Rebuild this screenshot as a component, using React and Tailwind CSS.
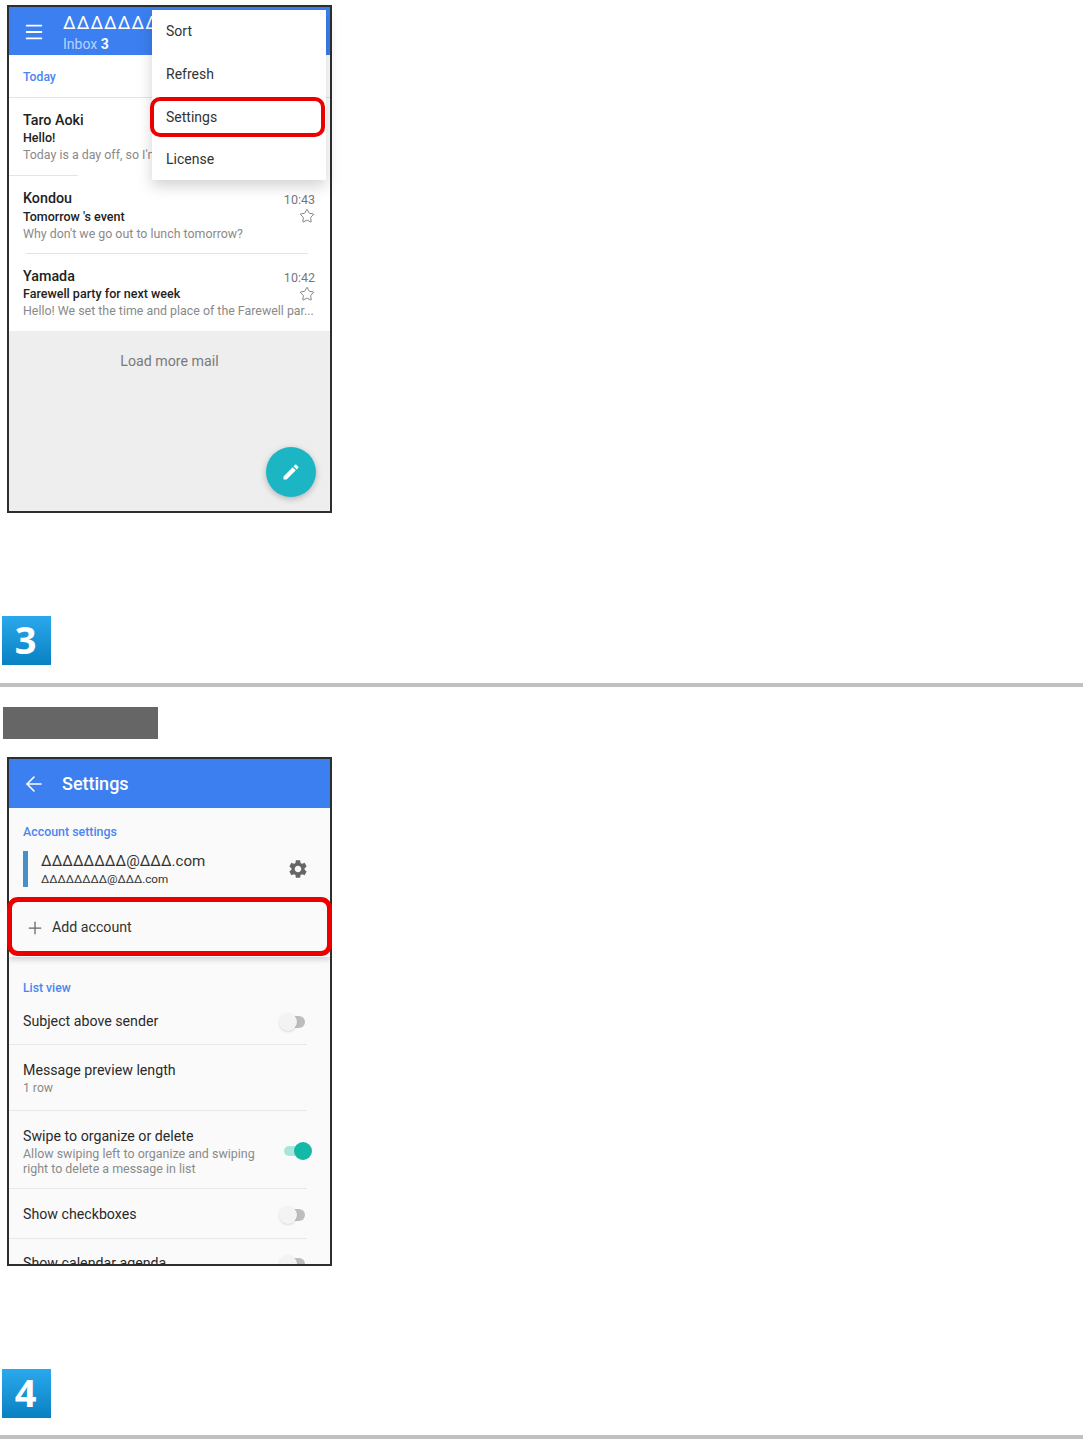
import { ArrowLeft, Menu, Plus, Star } from "lucide-react";
import { MdEdit, MdSettings } from "react-icons/md";

const mails = [
  { name: "Taro Aoki", subject: "Hello!", body: "Today is a day off, so I'm going out", time: "10:44", h: "h-[78px]", line: "right-auto w-[69px]", sub: "leading-[16px]" },
  { name: "Kondou", subject: "Tomorrow 's event", body: "Why don't we go out to lunch tomorrow?", time: "10:43", h: "h-[78px]", line: "left-[17px] right-[22px]", sub: "leading-[17px]" },
  { name: "Yamada", subject: "Farewell party for next week", body: "Hello! We set the time and place of the Farewell par...", time: "10:42", h: "h-[77px]", sub: "leading-[16px]" },
];

// frame with the clipped screen inside, marks sit on top of the frame
function Phone({ children, marks, className = "" }) {
  return (
    <div className={`relative ml-[7px] w-[325px] border-2 border-[#2b2f2e] bg-white ${className}`}>
      <div className="h-full overflow-hidden">{children}</div>
      {marks}
    </div>
  );
}

function MailRow({ mail }) {
  return (
    <div className={`relative ${mail.h} pl-[14px] pr-[15px] pt-[12px]`}>
      <div className="flex justify-between">
        <div className="min-w-0">
          <p className="text-[14.3px] leading-[20px] font-medium text-[#222]">{mail.name}</p>
          <p className={`text-[12.5px] font-medium text-[#222] ${mail.sub}`}>{mail.subject}</p>
          <p className="whitespace-nowrap text-[12.4px] leading-[17px] text-[#8a8a8a]">{mail.body}</p>
        </div>
        <div className="flex shrink-0 flex-col items-end pt-[3px]">
          <span className="text-[12.5px] leading-[17px] text-[#777]">{mail.time}</span>
          <Star size={16} strokeWidth={1.2} className="text-[#666]" />
        </div>
      </div>
      {mail.line && <div className={`absolute bottom-0 left-0 h-px bg-[#e4e4e4] ${mail.line}`} />}
    </div>
  );
}

function Toggle({ on }) {
  if (on) {
    return (
      <div className="relative h-[20px] w-[28px]">
        <div className="absolute left-0 top-[5px] h-[10px] w-[22px] rounded-full bg-[#a8e6dc]" />
        <div className="absolute right-0 top-[1px] h-[18px] w-[18px] rounded-full bg-[#14b8a6]" />
      </div>
    );
  }
  return (
    <div className="relative h-[20px] w-[28px]">
      <div className="absolute right-0 top-[4px] h-[12px] w-[22px] rounded-full bg-[#bdbdbd]" />
      <div className="absolute left-[2px] top-[1px] h-[18px] w-[18px] rounded-full bg-[#f3f3f3] shadow-sm" />
    </div>
  );
}

function ToggleRow({ label, h, border = true }) {
  return (
    <div className={`mr-[23px] flex items-center justify-between pl-[14px] pt-[2px] ${h} ${border ? "border-b border-[#e8e8e8]" : ""}`}>
      <span className="text-[14.2px] text-[#2a2a2a]">{label}</span>
      <div className="mr-[2px]"><Toggle /></div>
    </div>
  );
}

function StepBadge({ n, className = "" }) {
  return (
    <div className={`ml-[2px] flex h-[49px] w-[49px] items-center justify-center bg-gradient-to-b from-[#29a9ec] to-[#0681c2] pb-[4px] pr-[2px] font-['Open_Sans',sans-serif] text-[38px] leading-none font-bold text-white ${className}`}>
      {n}
    </div>
  );
}

function InboxScreen() {
  return (
    <Phone
      className="mt-[5px] h-[508px]"
      marks={
        <>
          <div className="absolute left-[143px] top-[3px] h-[170px] w-[174px] bg-white pl-[14px] pt-[0.5px] text-[14px] text-[#333] shadow-[0_6px_14px_rgba(0,0,0,0.18)]">
            {["Sort", "Refresh", "Settings", "License"].map((t) => (
              <div key={t} className="flex h-[42.7px] items-center">{t}</div>
            ))}
          </div>
          <div className="absolute left-[141px] top-[90px] h-[40px] w-[175px] rounded-[10px] border-[4px] border-[#ea0000]" />
          <div className="absolute left-[257px] top-[440px] flex h-[50px] w-[50px] items-center justify-center rounded-full bg-[#1cb5c4] text-white shadow-[0_2px_6px_rgba(0,0,0,0.25)]">
            <MdEdit size={20} />
          </div>
        </>
      }
    >
      <div className="flex h-[48px] items-center bg-[#3b7ff0] text-white">
        <Menu size={22} strokeWidth={2} className="ml-[14px] mt-[2px]" />
        <div className="ml-[18px] mt-[4px] whitespace-nowrap">
          <p className="text-[18px] leading-[22px] tracking-[1px]">ΔΔΔΔΔΔΔΔΔΔ</p>
          <p className="mt-[1px] text-[14px] leading-[19px] text-[#b9d2fb]">
            Inbox <b className="font-bold text-white">3</b>
          </p>
        </div>
      </div>
      <div className="flex h-[43px] items-center border-b border-[#e4e4e4] pl-[14px] pt-[2px] text-[12.2px] font-medium text-[#4a86f0]">
        Today
      </div>
      {mails.map((m) => (
        <MailRow key={m.name} mail={m} />
      ))}
      <div className="h-[180px] bg-[#eeeeee] pt-[19px] text-center text-[14.2px] leading-[22px] text-[#7a7a7a]">
        Load more mail
      </div>
    </Phone>
  );
}

function SettingsScreen() {
  return (
    <Phone
      className="mt-[18px] h-[509px]"
      marks={<div className="absolute left-[-2px] top-[138px] h-[59px] w-[325px] rounded-[11px] border-[5px] border-[#ea0000]" />}
    >
      <div className="flex h-[49px] items-center bg-[#3b7ff0] text-white shadow-[0_1px_2px_rgba(0,0,0,0.2)]">
        <ArrowLeft size={24} strokeWidth={1.6} className="ml-[13px]" />
        <span className="ml-[16px] text-[18px] font-medium">Settings</span>
      </div>
      <div className="h-full bg-[#fafafa]">
        <p className="pl-[14px] pt-[15px] text-[12.4px] leading-[17px] font-medium text-[#4a86f0]">Account settings</p>
        <div className="mt-[11px] flex h-[36px] items-center pl-[14px] pr-[21px]">
          <div className="h-[36px] w-[5px] bg-[#4a90c8]" />
          <div className="ml-[13px] flex-1">
            <p className="text-[15.1px] leading-[20px] text-[#333]">ΔΔΔΔΔΔΔΔ@ΔΔΔ.com</p>
            <p className="text-[11.7px] leading-[16px] text-[#333]">ΔΔΔΔΔΔΔΔ@ΔΔΔ.com</p>
          </div>
          <MdSettings size={22} className="-mt-[1px] text-[#666]" />
        </div>
        <div className="mt-[11px] flex h-[59px] items-center pl-[16px] text-[14.2px] text-[#333] shadow-[0_3px_5px_rgba(0,0,0,0.15)]">
          <Plus size={20} strokeWidth={1.5} className="text-[#666]" />
          <span className="ml-[7px]">Add account</span>
        </div>
        <p className="pl-[14px] pt-[23px] text-[12.2px] leading-[17px] font-medium text-[#4a86f0]">List view</p>
        <ToggleRow label="Subject above sender" h="h-[48px]" />
        <div className="mr-[23px] h-[66px] border-b border-[#e8e8e8] pl-[14px] pt-[15px]">
          <p className="text-[14.2px] leading-[20px] text-[#2a2a2a]">Message preview length</p>
          <p className="text-[12.2px] leading-[17px] text-[#8a8a8a]">1 row</p>
        </div>
        <div className="mr-[23px] flex h-[78px] items-center justify-between border-b border-[#e8e8e8] pl-[14px] pt-[3px]">
          <div>
            <p className="text-[14.2px] leading-[20px] text-[#2a2a2a]">Swipe to organize or delete</p>
            <p className="text-[12.45px] leading-[15px] text-[#8a8a8a]">Allow swiping left to organize and swiping<br />right to delete a message in list</p>
          </div>
          <div className="-mr-[5px]"><Toggle on /></div>
        </div>
        <ToggleRow label="Show checkboxes" h="h-[50px]" />
        <ToggleRow label="Show calendar agenda" h="h-[48px]" border={false} />
      </div>
    </Phone>
  );
}

export default function App() {
  return (
    <div className="h-[1440px] w-[1083px] overflow-hidden bg-white font-['Roboto',sans-serif]">
      <InboxScreen />
      <StepBadge n="3" className="mt-[103px]" />
      <div className="mt-[18px] h-[4px] bg-[#c0c0c0]" />
      <div className="ml-[3px] mt-[20px] h-[32px] w-[155px] bg-[#666666]" />
      <SettingsScreen />
      <StepBadge n="4" className="mt-[103px]" />
      <div className="mt-[17px] h-[4px] bg-[#c0c0c0]" />
    </div>
  );
}
